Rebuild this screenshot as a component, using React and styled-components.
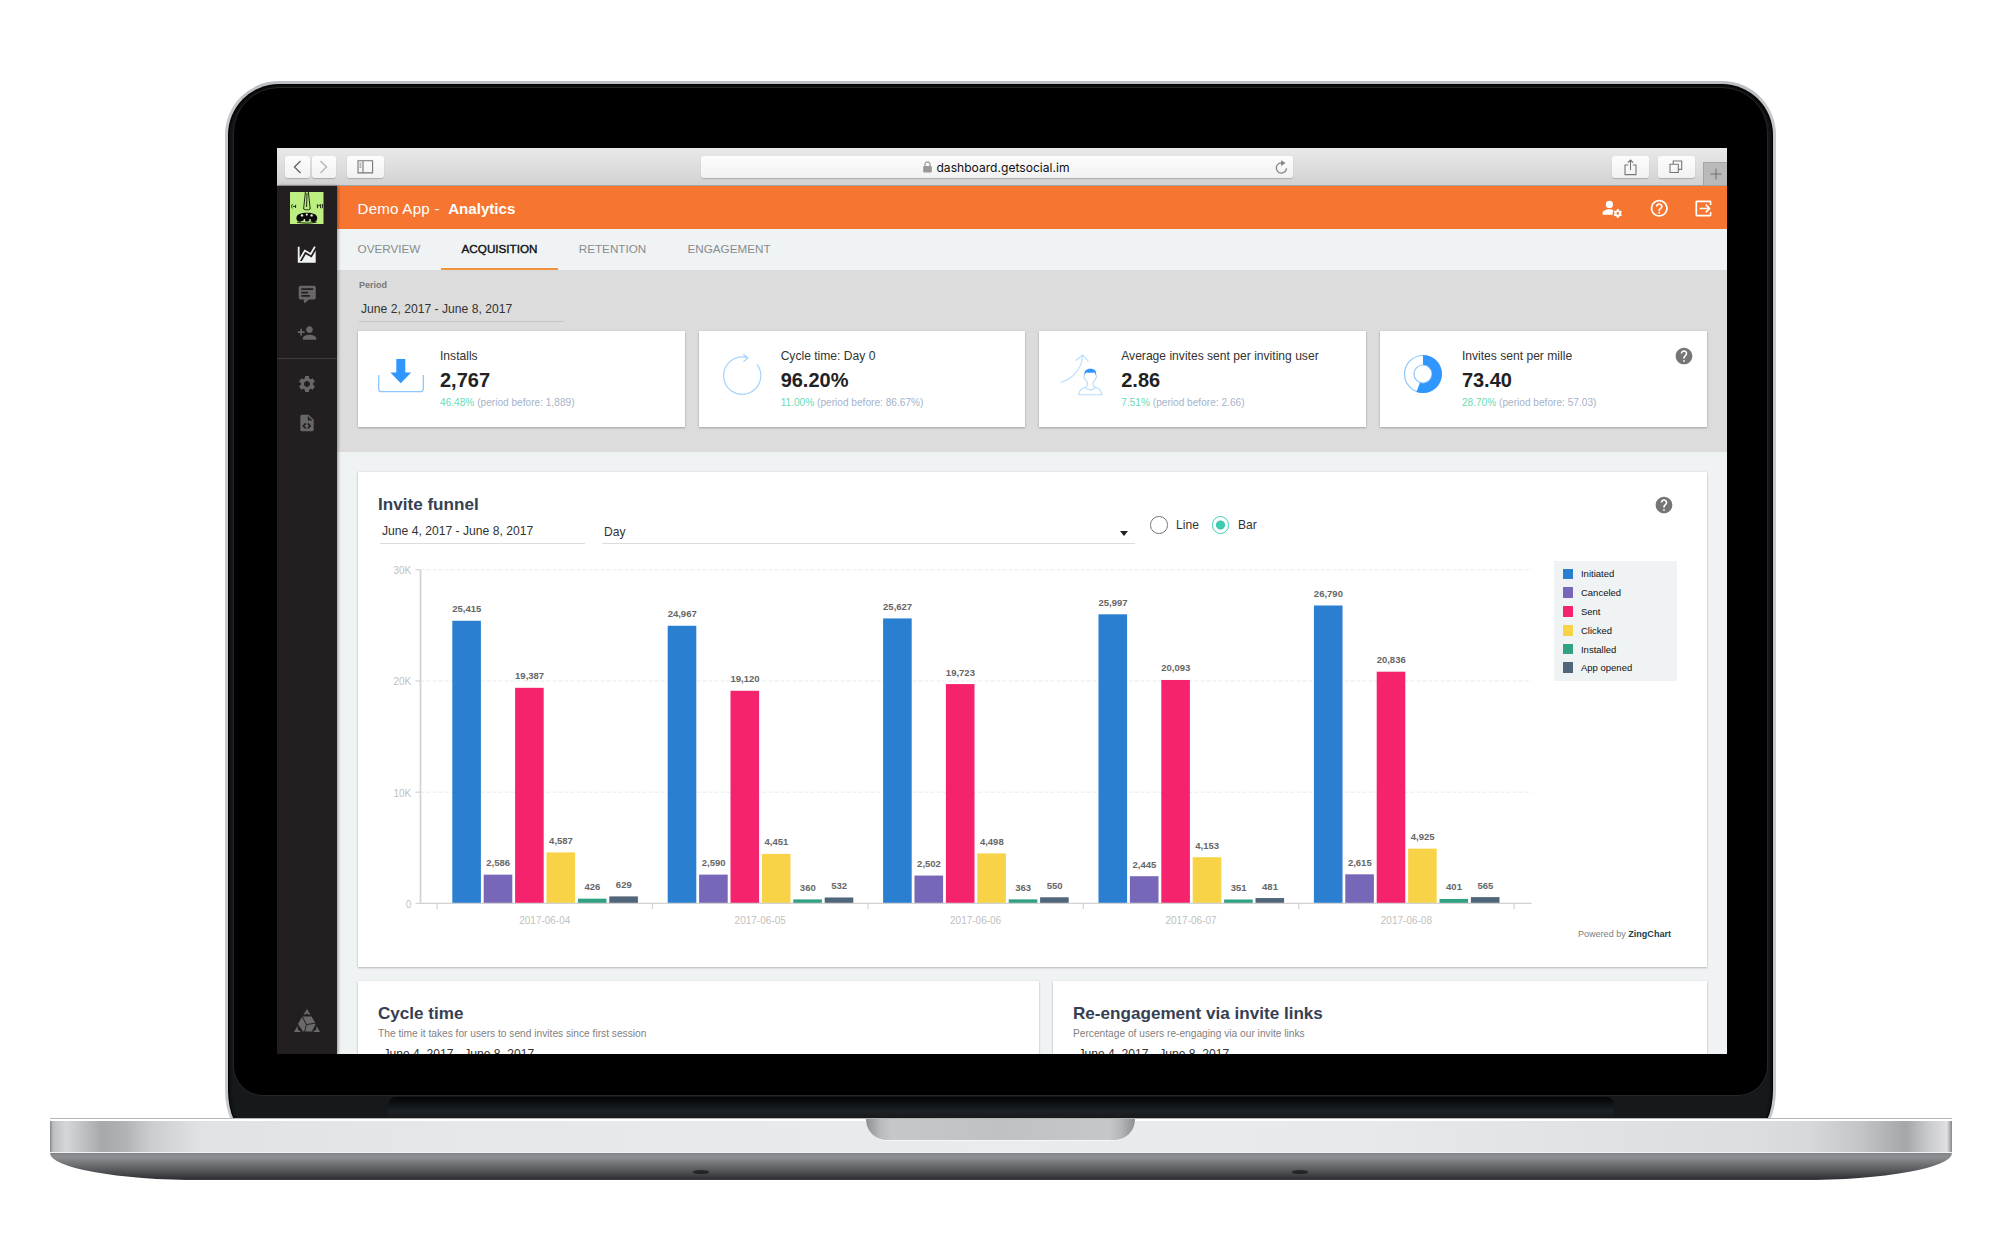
import React from 'react';
import styled, { createGlobalStyle, css } from 'styled-components';
import { MdHelp, MdHelpOutline, MdSettings, MdPersonAdd } from 'react-icons/md';

const SERIES = [
  { name: 'Initiated', color: '#2a7fd0' },
  { name: 'Canceled', color: '#7866b8' },
  { name: 'Sent', color: '#f5226d' },
  { name: 'Clicked', color: '#f8d348' },
  { name: 'Installed', color: '#31a184' },
  { name: 'App opened', color: '#50667a' },
];

const DAYS = [
  { date: '2017-06-04', values: [25415, 2586, 19387, 4587, 426, 629] },
  { date: '2017-06-05', values: [24967, 2590, 19120, 4451, 360, 532] },
  { date: '2017-06-06', values: [25627, 2502, 19723, 4498, 363, 550] },
  { date: '2017-06-07', values: [25997, 2445, 20093, 4153, 351, 481] },
  { date: '2017-06-08', values: [26790, 2615, 20836, 4925, 401, 565] },
];

const STATS = [
  {
    label: 'Installs',
    value: '2,767',
    change: '46.48%',
    before: '1,889',
    icon: <DownloadIcon />,
  },
  {
    label: 'Cycle time: Day 0',
    value: '96.20%',
    change: '11.00%',
    before: '86.67%',
    icon: <CycleIcon />,
  },
  {
    label: 'Average invites sent per inviting user',
    value: '2.86',
    change: '7.51%',
    before: '2.66',
    icon: <InviterIcon />,
  },
  {
    label: 'Invites sent per mille',
    value: '73.40',
    change: '28.70%',
    before: '57.03',
    icon: <DonutIcon />,
    help: true,
  },
];

const TABS = ['OVERVIEW', 'ACQUISITION', 'RETENTION', 'ENGAGEMENT'];

function App() {
  return (
    <Page>
      <GlobalStyle />
      <Laptop>
        <Lid>
          <Glass>
            <Screen>
              <BrowserBar />
              <Dashboard>
                <SideMenu />
                <Content>
                  <Header />
                  <Tabs>
                    {TABS.map(tab => (
                      <Tab key={tab} $active={tab === 'ACQUISITION'}>
                        {tab}
                      </Tab>
                    ))}
                  </Tabs>
                  <Summary>
                    <PeriodLabel>Period</PeriodLabel>
                    <DateField>June 2, 2017 - June 8, 2017</DateField>
                    <StatRow>
                      {STATS.map(stat => (
                        <Stat key={stat.label} {...stat} />
                      ))}
                    </StatRow>
                  </Summary>
                  <Reports>
                    <Funnel />
                    <ReportRow>
                      <Report
                        title="Cycle time"
                        text="The time it takes for users to send invites since first session"
                      />
                      <Report
                        title="Re-engagement via invite links"
                        text="Percentage of users re-engaging via our invite links"
                      />
                    </ReportRow>
                  </Reports>
                </Content>
              </Dashboard>
            </Screen>
          </Glass>
          <Hinge />
        </Lid>
        <LaptopBase />
      </Laptop>
    </Page>
  );
}

function BrowserBar() {
  return (
    <Toolbar>
      <NavButtons>
        <BarButton $width={25}>
          <svg width="9" height="14" viewBox="0 0 9 14">
            <path d="M7.5 1L1.5 7l6 6" fill="none" stroke="#666" strokeWidth="1.4" />
          </svg>
        </BarButton>
        <BarButton $width={24.5}>
          <svg width="9" height="14" viewBox="0 0 9 14">
            <path d="M1.5 1l6 6-6 6" fill="none" stroke="#b5b5b5" strokeWidth="1.4" />
          </svg>
        </BarButton>
      </NavButtons>
      <BarButton $width={37}>
        <svg width="17" height="14" viewBox="0 0 17 14" fill="none" stroke="#777">
          <path d="M1 .7h14.6v12.2H1zM6 .7v12.2" strokeWidth="1.1" />
          <path d="M2.4 3.2h2M2.4 5.2h2M2.4 7.2h2" strokeWidth=".9" />
        </svg>
      </BarButton>
      <AddressBar>
        <Address>
          <svg width="9" height="12" viewBox="0 0 9 12">
            <path d="M2 6V3.6a2.5 2.8 0 015 0V6" fill="none" stroke="#999" strokeWidth="1.2" />
            <rect x=".2" y="5" width="8.6" height="6.6" rx=".8" fill="#999" />
          </svg>
          dashboard.getsocial.im
        </Address>
        <svg width="13" height="15" viewBox="0 0 13 15">
          <path d="M7.5 3a5.1 5.1 0 104 5.2" fill="none" stroke="#858585" strokeWidth="1.3" />
          <path d="M6 .2l4.6 2.9L6 5.9z" fill="#858585" />
        </svg>
      </AddressBar>
      <RightButtons>
        <BarButton $width={37}>
          <svg width="13" height="17" viewBox="0 0 13 17" fill="none" stroke="#777" strokeWidth="1.1">
            <path d="M4.2 6H1v9.6h11V6H8.8M6.5 11V1.2M3.8 3.7l2.7-2.6 2.7 2.6" />
          </svg>
        </BarButton>
        <BarButton $width={37}>
          <svg width="14" height="14" viewBox="0 0 14 14" fill="none" stroke="#777" strokeWidth="1.1">
            <path d="M1 4.2h8.3v8.3H1zM4.2 4V1h8.5v8.4H9.5" />
          </svg>
        </BarButton>
      </RightButtons>
      <NewTab>
        <svg width="12" height="12" viewBox="0 0 12 12" stroke="#6f6f6f">
          <path d="M6 .5v11M.5 6h11" />
        </svg>
      </NewTab>
    </Toolbar>
  );
}

function SideMenu() {
  return (
    <Sidebar>
      <Avatar viewBox="0 0 33.5 32">
        <rect width="33.5" height="32" fill="#bdee82" />
        <g fill="none" stroke="#1c2a12">
          <path d="M15.4 0l-1.8 17c2 1.2 4.6 1.2 6.6 0L18.4 0M17 1l-.4 14" />
          <path d="M2.4 12.2c-1 1.2-1 3 0 4.2M3 14.4h3M5.6 12.8v3.2M27.4 12.2v4M27.6 14.4l3-1.8v3.6M32 12c.8 1.2.8 3 0 4.2" />
          <path d="M7 30.2c6 1.2 13 1.2 19.6 0" />
        </g>
        <path
          d="M9.4 22c4-1.8 11-1.8 15 0 2.8 1.2 3.6 4.4 2.2 6.6-1.6 2.2-4.8 1.8-6.8.2-2 .8-4.8.8-6.6-.2-2 1.4-4.8 1.6-6.2-.4-1.4-2.2-.2-5.2 2.4-6.2z"
          fill="#0c0c0c"
        />
        <g fill="#e8f6d6">
          <circle cx="12" cy="23.4" r="1.2" />
          <circle cx="16.8" cy="22.6" r="1.1" />
          <circle cx="21.6" cy="23.4" r="1.2" />
          <circle cx="14.4" cy="28" r=".9" />
          <circle cx="20" cy="28" r=".9" />
        </g>
      </Avatar>
      <MenuItem $active>
        <svg width="21.5" height="21.5" viewBox="0 0 24 24" fill="currentColor">
          <path d="M17.45 15.18L22 7.31V21H2V3h2v12.54L9.5 6 16 9.78l4.24-7.33 1.73 1-5.23 9.05-6.51-3.75L4.31 19h2.26l4.39-7.56z" />
        </svg>
      </MenuItem>
      <MenuItem>
        <svg width="20.5" height="20.5" viewBox="0 0 24 24" fill="currentColor">
          <path d="M20 2a2 2 0 012 2v12a2 2 0 01-2 2h-6.1l-3.7 3.71c-.2.19-.45.29-.7.29H9a1 1 0 01-1-1v-3H4a2 2 0 01-2-2V4a2 2 0 012-2zM5 5v2h14V5zm0 4v2h8V9zm0 4v2h10v-2z" />
        </svg>
      </MenuItem>
      <MenuItem>
        <MdPersonAdd size={20} />
      </MenuItem>
      <MenuDivider />
      <MenuItem>
        <MdSettings size={20} />
      </MenuItem>
      <MenuItem>
        <svg width="20" height="20" viewBox="0 0 24 24" fill="currentColor">
          <path d="M13 9h5.5L13 3.5zM6 2h8l6 6v12a2 2 0 01-2 2H6a2 2 0 01-2-2V4a2 2 0 012-2m.12 13.5l3.74 3.74 1.42-1.41-2.33-2.33 2.33-2.33-1.42-1.41zm11.16 0l-3.74-3.74-1.42 1.41 2.33 2.33-2.33 2.33 1.42 1.41z" />
        </svg>
      </MenuItem>
      <BrandMark viewBox="0 0 26 24">
        <path d="M13 0l3.7 6L13 4.7 9.3 6zM0 23l3.4-6 .4 3.4L7.200 23zM26 23l-3.4-6-.4 3.4-3.400 2.600z" />
        <path d="M8.200 7.600h9.300l4.300 7.200-3.900 7.700H9L4 15z" />
        <path d="M8 7l4.400 8.600 9.600-1.600M12.400 15.600L10.600 23" fill="none" stroke="#231f20" />
      </BrandMark>
    </Sidebar>
  );
}

function Header() {
  return (
    <HeaderBar>
      <AppName>Demo App -</AppName>
      <PageName>Analytics</PageName>
      <HeaderIcons>
        <svg width="21" height="18" viewBox="0 0 21 18">
          <circle cx="7.4" cy="4.4" r="3.6" fill="#fff" />
          <path d="M.6 14.8v-1.7c0-2.6 4.5-3.8 6.8-3.8 1.3 0 2.8.3 4.2.9-1 1.3-1.2 3-.6 4.6z" fill="#fff" />
          <circle cx="15.8" cy="13.4" r="2.3" fill="none" stroke="#fff" strokeWidth="1.9" />
          <path
            d="M15.8 9.1v1.6M15.8 16.1v1.6M12.1 11.3l1.4.8M18.1 14.7l1.4.8M12.1 15.5l1.4-.8M18.1 12.1l1.4-.8"
            stroke="#fff"
            strokeWidth="2"
          />
        </svg>
        <MdHelpOutline size={20.5} />
        <svg width="17" height="17" viewBox="0 0 17 17" fill="none" stroke="#fff" strokeWidth="1.7">
          <path d="M15.6 5V1.9a.6.6 0 00-.6-.6H1.900a.6.6 0 00-.6.6V15a.6.6 0 00.6.6H15a.6.6 0 00.6-.6v-3" />
          <path d="M4.6 8.5h9.6M10.7 4.7l3.8 3.8-3.8 3.8" />
        </svg>
      </HeaderIcons>
    </HeaderBar>
  );
}

function Stat(props) {
  return (
    <StatCard>
      <StatIcon>{props.icon}</StatIcon>
      <StatBody>
        <StatLabel>{props.label}</StatLabel>
        <StatValue>{props.value}</StatValue>
        <StatNote>
          <em>{props.change}</em> (period before: {props.before})
        </StatNote>
      </StatBody>
      {props.help && (
        <StatHelp>
          <MdHelp />
        </StatHelp>
      )}
    </StatCard>
  );
}

function Funnel() {
  return (
    <FunnelCard>
      <FunnelTitle>
        <CardTitle>Invite funnel</CardTitle>
        <MdHelp />
      </FunnelTitle>
      <Controls>
        <DateField>June 4, 2017 - June 8, 2017</DateField>
        <Select>
          Day
          <Caret />
        </Select>
        <RadioGroup>
          <Radio />
          <RadioLabel>Line</RadioLabel>
          <Radio $checked />
          <RadioLabel>Bar</RadioLabel>
        </RadioGroup>
      </Controls>
      <ChartRow>
        <FunnelChart />
        <ChartSide>
          <Legend>
            {SERIES.map(({ name, color }) => (
              <LegendItem key={name} $color={color}>
                {name}
              </LegendItem>
            ))}
          </Legend>
          <Credit>
            Powered by <strong>ZingChart</strong>
          </Credit>
        </ChartSide>
      </ChartRow>
    </FunnelCard>
  );
}

const BASE_Y = 359.4;
const AXIS_X = 42.5;
const PLOT_RIGHT = 1153.6;
const PX_PER_UNIT = 111.2 / 10000;
const GROUP_X = 59.1;
const GROUP_WIDTH = 215.4;
const BAR_STEP = 31.4;

function FunnelChart() {
  return (
    <ChartSvg width="1175.7" height="400">
      {[0, 10000, 20000, 30000].map(tick => {
        const y = BASE_Y - tick * PX_PER_UNIT;
        return (
          <g key={tick}>
            {tick > 0 && <GridLine x1={AXIS_X} x2={PLOT_RIGHT} y1={y} y2={y} />}
            <Axis x1={AXIS_X - 5} x2={AXIS_X} y1={y} y2={y} />
            <TickText x="33.2" y={y + 4.3} textAnchor="end">
              {tick ? `${tick / 1000}K` : '0'}
            </TickText>
          </g>
        );
      })}
      {DAYS.map(({ date, values }, i) => {
        const x = GROUP_X + i * GROUP_WIDTH;
        return (
          <g key={date}>
            {values.map((value, j) => {
              const barX = x + 15.2 + j * BAR_STEP;
              const height = value * PX_PER_UNIT;
              return (
                <g key={SERIES[j].name}>
                  <rect x={barX} y={BASE_Y - height} width="28.6" height={height} fill={SERIES[j].color} />
                  <ValueText x={barX + 14.5} y={BASE_Y - height - 8.5}>
                    {value.toLocaleString('en-US')}
                  </ValueText>
                </g>
              );
            })}
            <TickText x={x + GROUP_WIDTH / 2} y="379.6" textAnchor="middle">
              {date}
            </TickText>
          </g>
        );
      })}
      {[0, 1, 2, 3, 4, 5].map(i => (
        <Axis
          key={i}
          x1={GROUP_X + i * GROUP_WIDTH}
          x2={GROUP_X + i * GROUP_WIDTH}
          y1={BASE_Y}
          y2={BASE_Y + 5.5}
        />
      ))}
      <Axis $thick x1={AXIS_X} x2={AXIS_X} y1={BASE_Y - 30000 * PX_PER_UNIT} y2={BASE_Y + 0.7} />
      <Axis x1={AXIS_X} x2={PLOT_RIGHT} y1={BASE_Y} y2={BASE_Y} />
    </ChartSvg>
  );
}

function Report(props) {
  return (
    <ReportCard>
      <CardTitle>{props.title}</CardTitle>
      <ReportText>{props.text}</ReportText>
      <ReportDate>June 4, 2017 - June 8, 2017</ReportDate>
    </ReportCard>
  );
}

function DownloadIcon() {
  return (
    <svg width="46" height="39" viewBox="0 0 46 39">
      <path
        d="M.7 21v14.300a2.400 2.400 0 002.400 2.400h39.800a2.400 2.400 0 002.400-2.400V21"
        fill="none"
        stroke="#8cc6fd"
        strokeWidth="1.3"
      />
      <path d="M18.300 5h9v13.500h5.900L22.800 29.200 12.400 18.500h5.900z" fill="#3096ff" />
    </svg>
  );
}

function CycleIcon() {
  return (
    <svg width="40" height="44" viewBox="0 0 40 44" fill="none" stroke="#a5d3fd" strokeWidth="1.2">
      <path d="M35 10.400A18.600 18.600 0 1 1 25.700 3.900M21.300.3l4.600 3.700-4.600 3.900" />
    </svg>
  );
}

function InviterIcon() {
  return (
    <svg width="44" height="42" viewBox="0 0 44 42" fill="none" stroke="#b9dcfc" strokeWidth="1.1">
      <path d="M.8 28.5C13 24.5 21.8 15 22.6 1.5M15.8 6.5l7-5.500 5.600 6.300" />
      <path d="M24.6 20.5c-.6 1.200-1.400 2.500 0 3.500.6 2 2 3.500 2.900 4.600.2 2.600-.3 4-2 4.600-3.600.8-6.400 3-6.800 7.600h23.100c-.4-4.600-3.200-6.800-6.800-7.600-1.700-.6-2.200-2-2-4.600 1-1.100 2.400-2.600 2.900-4.600 1.500-1 .7-2.300 0-3.500M25.200 33.600c2.600 3 7.600 3 10.200 0" />
      <path
        d="M24.700 21.400c-1-4.400 1.400-6.600 5.700-6.600s6.600 2.200 5.500 6.600c-.5-1.400-.8-2.600-1.700-3-2.800.5-5.300.5-7.800 0-.9.4-1.200 1.600-1.700 3z"
        fill="#3096ff"
        stroke="none"
      />
    </svg>
  );
}

function DonutIcon() {
  return (
    <svg width="40" height="40" viewBox="0 0 40 40">
      <g fill="none" stroke="#8cc6fd" strokeWidth="1.2">
        <circle cx="20" cy="20" r="18.5" />
        <circle cx="20" cy="20" r="9" />
      </g>
      <path d="M20 .9a19.100 19.100 0 1 1-6.600 37.100l3.500-9.300A9.200 9.200 0 1 0 20 10.800z" fill="#3096ff" />
    </svg>
  );
}

function LaptopBase() {
  return (
    <Base>
      <Deck>
        <Notch />
      </Deck>
      <Underside>
        <Foot />
        <Foot />
      </Underside>
    </Base>
  );
}

const GlobalStyle = createGlobalStyle`
  * {
    box-sizing: border-box;
  }

  body {
    margin: 0;
    background: #fff;
    font-family: 'Liberation Sans', Arial, sans-serif;
    color: #333;
  }

  svg {
    display: block;
    flex: none;
  }
`;

const card = css`
  background: #fff;
  box-shadow: 0 1px 2px rgba(0, 0, 0, 0.24), 0 0 2px rgba(0, 0, 0, 0.08);
`;

const Page = styled.div`
  width: 2000px;
  height: 1254px;
  padding: 81px 0 0 1px;
  overflow: hidden;
`;

const Laptop = styled.div`
  display: flex;
  flex-direction: column;
  align-items: center;
`;

const Lid = styled.div`
  display: flex;
  flex-direction: column;
  align-items: center;
  width: 1551px;
  height: 1055px;
  padding-top: 3px;
  border: 3px solid #c6c8cc;
  border-top-color: #bcbfc3;
  border-radius: 54px 54px 24px 24px / 54px 54px 46px 46px;
  background: #15191c;
  box-shadow: inset 0 0 0 1px #000, inset 0 2px 3px 2px #0a0a0a;
`;

const Glass = styled.div`
  width: 1535px;
  height: 1009px;
  flex: none;
  padding: 60px 41px 0 43px;
  border: 1px solid #262626;
  border-radius: 46px 46px 30px 30px;
  background: #000;
`;

const Hinge = styled.div`
  width: 1226px;
  height: 23px;
  margin-top: 1px;
  border-radius: 8px 8px 0 0;
  background: linear-gradient(#020305, #1c2125 60%, #171b1e 90%, #000);
`;

const Screen = styled.div`
  display: flex;
  flex-direction: column;
  width: 1450px;
  height: 906px;
  overflow: hidden;
`;

const Toolbar = styled.div`
  display: flex;
  align-items: center;
  height: 38px;
  flex: none;
  padding: 1px 0 0 8px;
  border-bottom: 1px solid #a3a3a3;
  background: linear-gradient(#e9e9e9, #d2d2d2);
`;

const NavButtons = styled.div`
  display: flex;
  gap: 1.5px;
  margin-right: 11px;
`;

const RightButtons = styled.div`
  display: flex;
  gap: 8.5px;
  margin-left: auto;
`;

const BarButton = styled.div`
  display: flex;
  align-items: center;
  justify-content: center;
  width: ${props => props.$width}px;
  height: 22px;
  border-radius: 3px;
  background: linear-gradient(#fdfdfd, #f2f2f2);
  box-shadow: 0 1px 1px rgba(0, 0, 0, 0.2);
`;

const AddressBar = styled.div`
  display: flex;
  align-items: center;
  width: 592px;
  height: 22px;
  margin-left: 317px;
  padding-right: 5px;
  border-radius: 3px;
  background: linear-gradient(#fdfdfd, #f2f2f2);
  box-shadow: 0 1px 1px rgba(0, 0, 0, 0.2);
`;

const Address = styled.div`
  display: flex;
  align-items: center;
  justify-content: center;
  flex: 1;
  gap: 4px;
  padding-left: 17px;
  font-family: Inter, sans-serif;
  font-size: 12.1px;
  color: #111;
`;

const NewTab = styled.div`
  display: flex;
  align-items: center;
  justify-content: center;
  align-self: flex-end;
  width: 24px;
  height: 23px;
  margin-left: 8.5px;
  border: 1px solid #a5a5a5;
  border-width: 1px 0 0 1px;
  background: #b9b9b9;
`;

const Dashboard = styled.div`
  display: flex;
  flex: 1;
  min-height: 0;
`;

const Sidebar = styled.div`
  display: flex;
  flex-direction: column;
  align-items: center;
  position: relative;
  width: 60px;
  padding: 6px 0 21px;
  background: #231f20;
  box-shadow: 1px 0 3px rgba(0, 0, 0, 0.4);
`;

const Avatar = styled.svg`
  width: 33.5px;
  height: 32px;
  margin-bottom: 11px;
`;

const MenuItem = styled.div`
  display: flex;
  align-items: center;
  justify-content: center;
  height: 39.3px;
  color: ${props => (props.$active ? '#eff3f4' : '#686767')};
`;

const MenuDivider = styled.div`
  width: 60px;
  height: 1px;
  margin: 5px 0;
  background: #3c3a3b;
`;

const BrandMark = styled.svg`
  width: 26px;
  height: 24px;
  margin-top: auto;
  fill: #6b6a6a;
`;

const Content = styled.div`
  display: flex;
  flex-direction: column;
  flex: 1;
  min-width: 0;
`;

const HeaderBar = styled.div`
  display: flex;
  align-items: center;
  height: 43px;
  flex: none;
  padding: 2px 15.5px 0 20.5px;
  background: #f67631;
  color: #fff;
  font-size: 15.1px;
`;

const AppName = styled.span`
  letter-spacing: 0.25px;
`;

const PageName = styled.strong`
  margin-left: 8.5px;
`;

const HeaderIcons = styled.div`
  display: flex;
  align-items: center;
  gap: 25.5px;
  margin-left: auto;
`;

const Tabs = styled.div`
  display: flex;
  height: 41.5px;
  flex: none;
  border-bottom: 1px solid #d9dddd;
  background: #eff3f4;
`;

const Tab = styled.div`
  padding: 0 20.6px;
  font-size: 11.7px;
  line-height: 40px;
  color: #8a8c8c;

  ${props =>
    props.$active &&
    css`
      border-bottom: 2.5px solid #f1933a;
      color: #111;
      -webkit-text-stroke: 0.4px #111;
    `}
`;

const Summary = styled.div`
  height: 181px;
  flex: none;
  padding: 8.5px 20.5px 0 21px;
  background: #dcdcdc;
`;

const PeriodLabel = styled.div`
  padding-left: 1px;
  font-size: 9px;
  font-weight: bold;
  line-height: 12px;
  color: #777;
`;

const DateField = styled.div`
  width: 205px;
  margin: 7px 0 9px 1px;
  padding-left: 2px;
  border-bottom: 1px solid #c6c6c6;
  font-size: 12.15px;
  line-height: 23px;
`;

const StatRow = styled.div`
  display: grid;
  grid-template-columns: repeat(4, 1fr);
  gap: 14px;
`;

const StatCard = styled.div`
  display: flex;
  height: 96px;
  ${card};
`;

const StatIcon = styled.div`
  display: flex;
  justify-content: center;
  width: 82px;
  padding: 23px 0 0 4px;
`;

const StatBody = styled.div`
  padding-top: 17px;
  white-space: nowrap;
`;

const StatLabel = styled.div`
  font-size: 12.1px;
  line-height: 16px;
`;

const StatValue = styled.div`
  font-size: 20px;
  font-weight: bold;
  line-height: 32px;
  color: #222;
`;

const StatNote = styled.div`
  font-size: 10.15px;
  line-height: 13px;
  color: #a6b3ca;

  em {
    font-style: normal;
    color: #6cdab3;
  }
`;

const StatHelp = styled.div`
  margin: 15px 12.5px 0 auto;
  font-size: 20px;
  color: #757575;
`;

const Reports = styled.div`
  display: flex;
  flex-direction: column;
  gap: 13.7px;
  padding: 20.5px 20.5px 0 21px;
  background: #eff3f4;
`;

const FunnelCard = styled.div`
  height: 495px;
  flex: none;
  padding: 22px 29px 0 20px;
  ${card};
`;

const FunnelTitle = styled.div`
  display: flex;
  align-items: center;
  justify-content: space-between;
  height: 21px;
  padding-right: 4px;
  font-size: 20px;
  color: #757575;
`;

const CardTitle = styled.div`
  font-size: 17.1px;
  font-weight: bold;
  line-height: 21px;
  color: #354052;
`;

const Controls = styled.div`
  display: flex;
  align-items: flex-end;
  height: 29px;

  ${DateField} {
    margin: 0 17px 0 2px;
    line-height: 24px;
    border-color: #dcdcdc;
  }
`;

const Select = styled.div`
  display: flex;
  align-items: center;
  justify-content: space-between;
  width: 532.5px;
  padding: 0 7px 0 2px;
  border-bottom: 1px solid #dcdcdc;
  font-size: 12.1px;
  line-height: 21px;
`;

const Caret = styled.i`
  margin-top: 2px;
  border: 4px solid transparent;
  border-top: 5px solid #222;
  border-bottom: 0;
`;

const RadioGroup = styled.div`
  display: flex;
  align-items: center;
  align-self: flex-start;
  height: 20px;
  margin-left: 15.5px;
`;

const Radio = styled.span`
  width: 17.5px;
  height: 17.5px;
  border: 1.5px solid ${props => (props.$checked ? '#40cdb5' : '#757575')};
  border-radius: 50%;
  background: ${props =>
    props.$checked ? 'radial-gradient(circle, #3fcab2 4.2px, #fff 4.9px)' : '#fff'};
`;

const RadioLabel = styled.span`
  margin: 0 13px 0 8.5px;
  font-size: 12.1px;
`;

const ChartRow = styled.div`
  display: flex;
`;

const ChartSvg = styled.svg`
  overflow: visible;
`;

const GridLine = styled.line`
  stroke: #e6ebec;
  stroke-dasharray: 4 2;
`;

const Axis = styled.line`
  stroke: #d2d2d2;
  stroke-width: ${props => (props.$thick ? 1.7 : 1.2)};
`;

const TickText = styled.text`
  font-size: 10px;
  fill: #bfbfbf;
`;

const ValueText = styled.text`
  font-size: 9.5px;
  font-weight: bold;
  text-anchor: middle;
  fill: #666;
`;

const ChartSide = styled.div`
  display: flex;
  flex-direction: column;
  padding-top: 17px;
`;

const Legend = styled.div`
  display: flex;
  flex-direction: column;
  width: 123.3px;
  height: 119.7px;
  padding: 3.5px 9px;
  background: #eff3f4;
`;

const LegendItem = styled.div`
  display: flex;
  align-items: center;
  height: 18.83px;
  font-size: 9.5px;
  color: #111;

  &::before {
    content: '';
    width: 10.7px;
    height: 10.7px;
    margin-right: 7.6px;
    background: ${props => props.$color};
  }
`;

const Credit = styled.div`
  margin: 247px 6px 0 0;
  font-size: 9.05px;
  line-height: 12px;
  text-align: right;
  color: #808080;

  strong {
    color: #17414f;
  }
`;

const ReportRow = styled.div`
  display: grid;
  grid-template-columns: 681px 1fr;
  gap: 14px;
`;

const ReportCard = styled.div`
  height: 300px;
  padding: 22px 20px;
  ${card};
`;

const ReportText = styled.div`
  margin-top: 4px;
  font-size: 10.2px;
  line-height: 12px;
  color: #7f7f7f;
`;

const ReportDate = styled.div`
  margin-top: 6px;
  padding-left: 5.5px;
  font-size: 12.1px;
  line-height: 16px;
`;

const Base = styled.div`
  position: relative;
  width: 1902px;
  margin-top: -18px;
`;

const Deck = styled.div`
  display: flex;
  justify-content: center;
  height: 34.5px;
  border-top: 1px solid #b4b5b5;
  border-bottom: 1.5px solid #f1f1f3;
  background: linear-gradient(
    90deg,
    #85868a,
    #bdbec1 3px,
    #d6d7d9 16px,
    #c4c5c7 30px,
    #a7a8aa 52px,
    #b2b3b5 76px,
    #cbcccd 100px,
    #e1e2e4 150px,
    #e6e7e9 400px,
    #eaebec 950px,
    #e8e9ea 1300px,
    #dcdde0 1700px,
    #d7d8dc 1760px,
    #c4c5c7 1810px,
    #a5a6a9 1856px,
    #c9cacc 1878px,
    #e0e0e3 1897px,
    #85868a
  );
  box-shadow: inset 0 2px 0 #fff;
`;

const Notch = styled.div`
  width: 269px;
  height: 21.5px;
  border-bottom: 1px solid #f6f6f6;
  border-radius: 0 0 21px 21px;
  background: linear-gradient(
    90deg,
    #8d8e92,
    #b9babd 14px,
    #c6c7c9 26px,
    #c0c1c2 50%,
    #c6c7c9 243px,
    #b5b6b9 255px,
    #8d8e92
  );
`;

const Underside = styled.div`
  display: flex;
  justify-content: center;
  gap: 583px;
  height: 27.5px;
  padding-top: 17.5px;
  border-radius: 0 0 150px 150px / 0 0 27px 27px;
  background: linear-gradient(#828388, #8e8f93 4px, #5c5d61 60%, #2f3033 96%, #4a4b4e);
`;

const Foot = styled.div`
  width: 16px;
  height: 3.5px;
  border-radius: 50%;
  background: #242528;
`;

export default App;
